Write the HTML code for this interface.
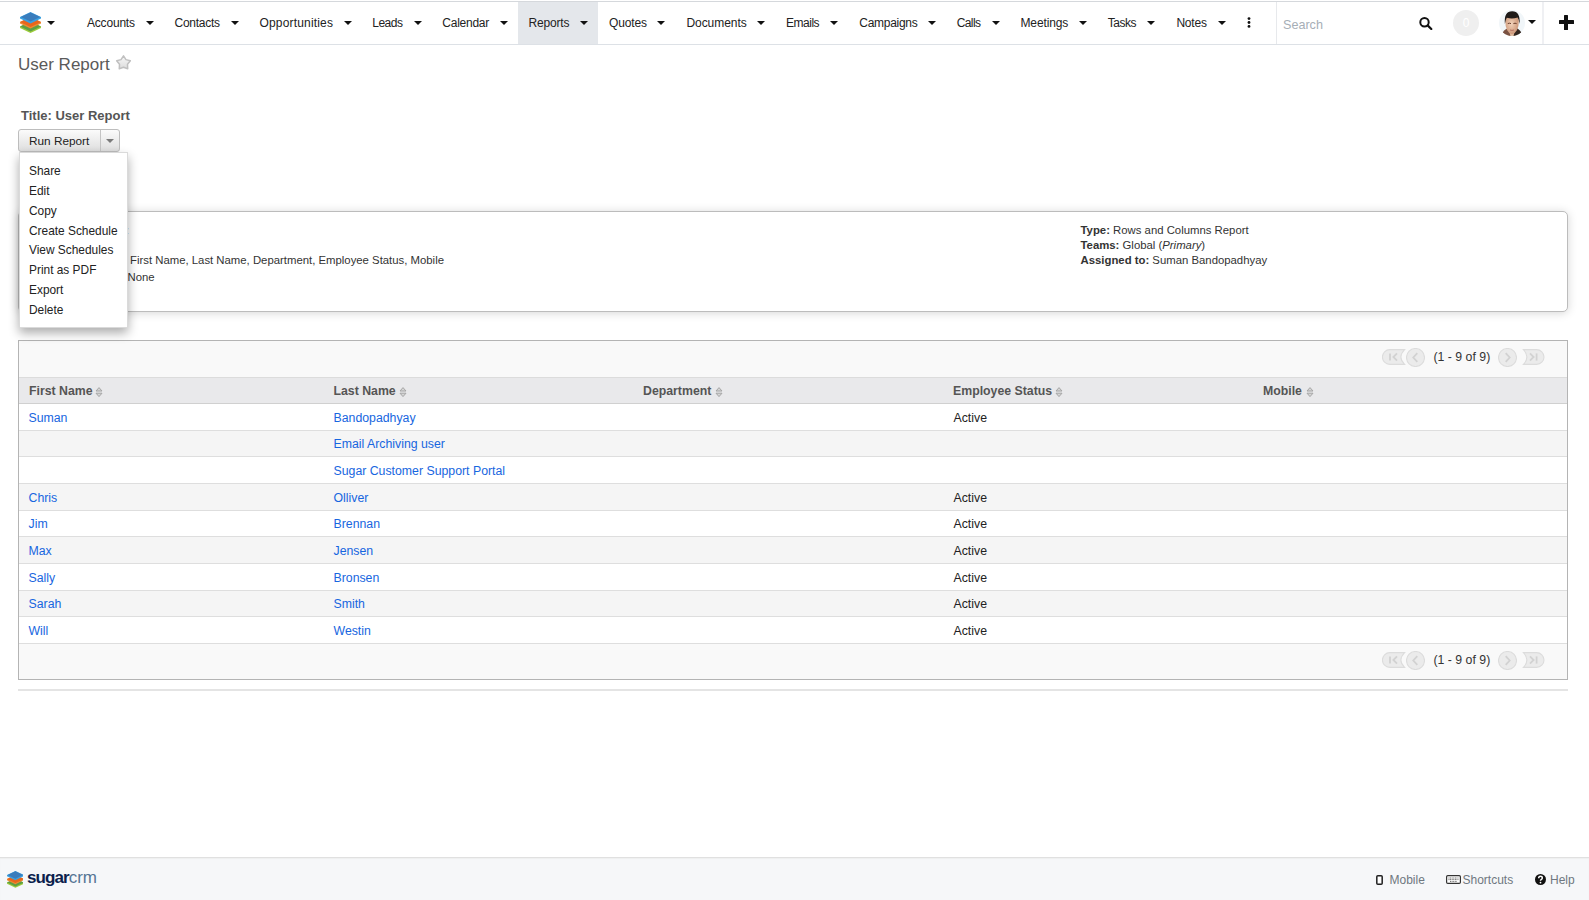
<!DOCTYPE html>
<html><head><meta charset="utf-8"><style>
*{margin:0;padding:0;box-sizing:border-box}
html,body{width:1589px;height:900px;overflow:hidden;background:#fff;font-family:"Liberation Sans",sans-serif;position:relative}
.abs{position:absolute}
#hdr{position:absolute;left:0;top:0;width:1589px;height:45px;background:#fff}
#hdr .tl{position:absolute;left:0;top:1px;width:1589px;height:1px;background:#d5d8dc}
#hdr .bl{position:absolute;left:0;top:44px;width:1589px;height:1px;background:#dde1e6}
#hl{position:absolute;left:518px;top:2px;width:80px;height:42px;background:#e4e7eb}
.nt{position:absolute;top:17px;font-size:12px;line-height:12px;color:#222;white-space:nowrap}
.car{position:absolute;top:21px;width:0;height:0;border-left:4px solid transparent;border-right:4px solid transparent;border-top:4.5px solid #111}
.title{position:absolute;left:18px;top:56px;font-size:17px;line-height:17px;color:#5a5a5a}
.t2{position:absolute;left:21px;top:109px;font-size:13px;line-height:13px;font-weight:bold;color:#555}
.btn{position:absolute;left:18px;top:129px;width:102px;height:23px;border:1px solid #bdbdbd;border-radius:3px;background:linear-gradient(#fbfbfb,#dedede)}
.btn .d{position:absolute;left:81px;top:0;width:1px;height:21px;background:#c4c4c4}
.btn .tx{position:absolute;left:10px;top:5px;font-size:11.8px;line-height:12px;color:#222}
.btn .c{position:absolute;left:87px;top:9px;width:0;height:0;border-left:4.3px solid transparent;border-right:4.3px solid transparent;border-top:4.2px solid #7a7a7a}
.menu{position:absolute;left:19px;top:152px;width:108.5px;height:176px;background:#fff;border:1px solid #dadada;box-shadow:0 5px 10px rgba(0,0,0,.33)}
.menu div{position:absolute;left:9px;font-size:11.9px;line-height:12px;color:#222;white-space:nowrap}
.panel{position:absolute;left:18px;top:211px;width:1550px;height:101px;border:1px solid #bcbcbc;border-radius:5px;box-shadow:0 1px 10px rgba(0,0,0,.17);background:#fff}
.pt{position:absolute;font-size:11.35px;line-height:12px;color:#333;white-space:nowrap}
.pt b{font-weight:bold}
.tbl{position:absolute;left:18px;top:340px;width:1550px;height:340px;border:1px solid #b4b4b4;background:#f9f9f9}
.hrow{position:absolute;left:0;top:36px;width:1548px;height:27px;background:#e9e9eb;border-top:1px solid #dcdcdc;border-bottom:1px solid #d0d0d0}
.th{position:absolute;top:7px;font-size:12.3px;line-height:12px;font-weight:bold;color:#555;white-space:nowrap}
.sort{position:absolute;top:9px}
.row{position:absolute;left:0;width:1548px;height:26.667px;border-bottom:1px solid #dedede}
.lk,.row .tx{position:absolute;top:7.5px;font-size:12.3px;line-height:12px;color:#1766e0;white-space:nowrap}
.row .tx{color:#222}
.pager{position:absolute;left:0;width:1550px;height:16px}
.ptx{position:absolute;left:1414.5px;top:1px;font-size:12.3px;line-height:14px;color:#333}
.sep{position:absolute;left:18px;top:689px;width:1550px;height:2px;background:#e4e4e4}
#ftr{position:absolute;left:0;top:857px;width:1589px;height:43px;background:#f6f7f9;border-top:1px solid #e0e0e0;box-shadow:inset 0 1px 1px #efefef}
.ft{position:absolute;top:16px;font-size:12px;line-height:12px;color:#6f7780;white-space:nowrap}
</style></head><body>
<div id="hdr">
<div class="tl"></div><div class="bl"></div>
<div id="hl"></div>
<svg style="position:absolute;left:20px;top:12px" width="21" height="21" viewBox="0 0 21 21">
<polygon points="0,14.5 10.5,9.5 21,14.5 21,16 10.5,21 0,16" fill="#9ccc3c"/>
<polygon points="0,14.5 10.5,9.5 21,14.5 10.5,19.5" fill="#5e9e44"/>
<polygon points="0,10 10.5,5 21,10 21,11.5 10.5,16.5 0,11.5" fill="#f08a30"/>
<polygon points="0,10 10.5,5 21,10 10.5,15" fill="#e8661c"/>
<polygon points="0,5 10.5,0 21,5 21,6.5 10.5,11.5 0,6.5" fill="#3aa0e0"/>
<polygon points="0.8,5 10.5,0.4 20.2,5 10.5,9.6" fill="#3a7cbc"/>
</svg>
<div class="car" style="left:47px"></div>
<div class="nt" style="left:87.0px;letter-spacing:-0.194px">Accounts</div><div class="car" style="left:146.0px"></div>
<div class="nt" style="left:174.5px;letter-spacing:-0.265px">Contacts</div><div class="car" style="left:231.0px"></div>
<div class="nt" style="left:259.4px;letter-spacing:0.185px">Opportunities</div><div class="car" style="left:344.0px"></div>
<div class="nt" style="left:372.3px;letter-spacing:-0.525px">Leads</div><div class="car" style="left:413.7px"></div>
<div class="nt" style="left:442.3px;letter-spacing:-0.242px">Calendar</div><div class="car" style="left:500.0px"></div>
<div class="nt" style="left:528.6px;letter-spacing:-0.185px">Reports</div><div class="car" style="left:580.0px"></div>
<div class="nt" style="left:609.0px;letter-spacing:-0.118px">Quotes</div><div class="car" style="left:657.3px"></div>
<div class="nt" style="left:686.4px;letter-spacing:-0.037px">Documents</div><div class="car" style="left:757.4px"></div>
<div class="nt" style="left:786.0px;letter-spacing:-0.482px">Emails</div><div class="car" style="left:830.4px"></div>
<div class="nt" style="left:859.3px;letter-spacing:-0.287px">Campaigns</div><div class="car" style="left:928.4px"></div>
<div class="nt" style="left:956.7px;letter-spacing:-0.594px">Calls</div><div class="car" style="left:991.9px"></div>
<div class="nt" style="left:1020.5px;letter-spacing:-0.128px">Meetings</div><div class="car" style="left:1079.3px"></div>
<div class="nt" style="left:1107.7px;letter-spacing:-0.443px">Tasks</div><div class="car" style="left:1147.3px"></div>
<div class="nt" style="left:1176.4px;letter-spacing:-0.186px">Notes</div><div class="car" style="left:1217.7px"></div>
<svg style="position:absolute;left:1246px;top:17px" width="6" height="11" viewBox="0 0 6 11"><circle cx="3" cy="1.6" r="1.4" fill="#111"/><circle cx="3" cy="5.5" r="1.4" fill="#111"/><circle cx="3" cy="9.4" r="1.4" fill="#111"/></svg>
<div style="position:absolute;left:1276px;top:2px;width:1px;height:42px;background:#e7e9ec"></div>
<div style="position:absolute;left:1283px;top:18.5px;font-size:12.6px;line-height:13px;color:#a6aeb6">Search</div>
<svg style="position:absolute;left:1419px;top:17px" width="14" height="13" viewBox="0 0 14 13"><circle cx="5.5" cy="5.3" r="4.2" stroke="#111" stroke-width="2" fill="none"/><path d="M8.6,8.4 L12.3,12" stroke="#111" stroke-width="2.2" stroke-linecap="round"/></svg>
<div style="position:absolute;left:1453px;top:9.5px;width:26px;height:26px;border-radius:50%;background:#efefef;color:#fff;font-size:12px;line-height:26px;text-align:center">0</div>
<svg style="position:absolute;left:1498.5px;top:10px" width="26" height="26" viewBox="0 0 26 26"><defs><clipPath id="av"><circle cx="13" cy="13" r="13"/></clipPath><radialGradient id="fc" cx="0.45" cy="0.45" r="0.6"><stop offset="0" stop-color="#f2d3bb"/><stop offset="1" stop-color="#c99070"/></radialGradient></defs><g clip-path="url(#av)"><rect width="26" height="26" fill="#f1f6f9"/><path d="M9,20 Q13,26 17,20 L18,26 L8,26 Z" fill="#e3bfa3"/><path d="M2,26 Q4.5,19 9.5,18.2 L11.5,26 Z" fill="#7a5242"/><path d="M24,26 Q21.5,19 16.5,17.8 L14.5,26 Z" fill="#33261f"/><path d="M6.3,11 Q6.3,5 13,5 Q19.8,5 19.8,11 Q19.8,22 13,24.5 Q6.3,22 6.3,11 Z" fill="url(#fc)"/><path d="M5.9,14 Q4.6,1.2 13.2,1.2 Q21.6,1.2 20.6,14 Q20,9.5 18.6,7.6 Q13,9.2 7.8,7.8 Q6.4,10 5.9,14 Z" fill="#1e1a18"/><path d="M8.8,13.6 q1.6,-0.8 3.2,0 M14.4,13.6 q1.6,-0.8 3.2,0" stroke="#6b3f2c" stroke-width="1" fill="none"/><path d="M11,20 q2,0.8 4,0" stroke="#b06a5c" stroke-width="0.9" fill="none"/></g></svg>
<div class="car" style="left:1528px;top:20px"></div>
<div style="position:absolute;left:1542px;top:2px;width:2px;height:42px;background:#eff0f3"></div>
<div style="position:absolute;left:1558.7px;top:20px;width:15px;height:4px;background:#111;border-radius:0.5px"></div>
<div style="position:absolute;left:1564.2px;top:14.5px;width:4px;height:15px;background:#111;border-radius:0.5px"></div>
</div>

<div class="title">User Report</div>
<svg style="position:absolute;left:114.5px;top:54px" width="17" height="17" viewBox="0 0 17 17"><defs><linearGradient id="sg" x1="0" y1="0" x2="0" y2="1"><stop offset="0" stop-color="#f8f8f8"/><stop offset="1" stop-color="#dcdcdc"/></linearGradient></defs><path d="M8.50,1.80 L10.97,5.60 L15.35,6.78 L12.49,10.30 L12.73,14.82 L8.50,13.20 L4.27,14.82 L4.51,10.30 L1.65,6.78 L6.03,5.60 Z" fill="url(#sg)" stroke="#c0c0c0" stroke-width="1.5" stroke-linejoin="round"/></svg>

<div class="t2">Title: User Report</div>
<div class="btn"><div class="tx">Run Report</div><div class="d"></div><div class="c"></div></div>

<div class="panel">
<div class="pt" style="left:10px;top:12px"><b>Module:</b> Users</div><div class="pt" style="left:107px;top:12px;color:#999">:</div>
<div class="pt" style="left:10px;top:27px"><b>Owner:</b></div>
<div class="pt" style="left:111px;top:42px">First Name, Last Name, Department, Employee Status, Mobile</div>
<div class="pt" style="left:108.5px;top:59px">None</div>
<div class="pt" style="left:1061.5px;top:12px"><b>Type:</b> Rows and Columns Report</div>
<div class="pt" style="left:1061.5px;top:27px"><b>Teams:</b> Global (<i>Primary</i>)</div>
<div class="pt" style="left:1061.5px;top:42px"><b>Assigned to:</b> Suman Bandopadhyay</div>
</div>

<div class="tbl">
<div class="pager" style="top:8px">
<svg style="position:absolute;left:1363px;top:0" width="24" height="16" viewBox="0 0 24 16"><path d="M7.8,0.6 H22.6 Q15.2,8 22.6,15.4 H7.8 A7.4,7.4 0 0 1 7.8,0.6 Z" fill="#ebebeb" stroke="#dcdcdc" stroke-width="1.1"/><path d="M8,4.4 V11.6" stroke="#d2d2d2" stroke-width="1.8" fill="none"/><path d="M15,4.4 L11.4,8 L15,11.6" stroke="#d2d2d2" stroke-width="1.8" fill="none"/></svg>
<svg style="position:absolute;left:1386.5px;top:-1.5px" width="19" height="19" viewBox="0 0 19 19"><circle cx="9.5" cy="9.5" r="9" fill="#ebebeb" stroke="#dcdcdc" stroke-width="1.1"/><path d="M11.3,5.2 L7.3,9.5 L11.3,13.8" stroke="#d2d2d2" stroke-width="1.8" fill="none"/></svg>
<div class="ptx">(1 - 9 of 9)</div>
<svg style="position:absolute;left:1478.5px;top:-1.5px" width="19" height="19" viewBox="0 0 19 19"><circle cx="9.5" cy="9.5" r="9" fill="#ebebeb" stroke="#dcdcdc" stroke-width="1.1"/><path d="M7.7,5.2 L11.7,9.5 L7.7,13.8" stroke="#d2d2d2" stroke-width="1.8" fill="none"/></svg>
<svg style="position:absolute;left:1502.5px;top:0" width="24" height="16" viewBox="0 0 24 16"><path d="M14.6,0.6 H1.4 Q8.4,8 1.4,15.4 H14.6 A7.4,7.4 0 0 0 14.6,0.6 Z" fill="#ebebeb" stroke="#dcdcdc" stroke-width="1.1"/><path d="M14.6,4.4 V11.6" stroke="#d2d2d2" stroke-width="1.8" fill="none"/><path d="M8,4.4 L11.6,8 L8,11.6" stroke="#d2d2d2" stroke-width="1.8" fill="none"/></svg>
</div>
<div class="hrow">
<div class="th" style="left:10px">First Name</div><svg class="sort" style="left:76px" width="8" height="11" viewBox="0 0 8 11"><path d="M1,4 L4,0.6 L7,4 Z M1,6.2 L4,9.6 L7,6.2 Z" fill="#d6d6d6" stroke="#a4a4a4" stroke-width="1"/></svg>
<div class="th" style="left:314.5px">Last Name</div><svg class="sort" style="left:380px" width="8" height="11" viewBox="0 0 8 11"><path d="M1,4 L4,0.6 L7,4 Z M1,6.2 L4,9.6 L7,6.2 Z" fill="#d6d6d6" stroke="#a4a4a4" stroke-width="1"/></svg>
<div class="th" style="left:624px">Department</div><svg class="sort" style="left:696px" width="8" height="11" viewBox="0 0 8 11"><path d="M1,4 L4,0.6 L7,4 Z M1,6.2 L4,9.6 L7,6.2 Z" fill="#d6d6d6" stroke="#a4a4a4" stroke-width="1"/></svg>
<div class="th" style="left:934px">Employee Status</div><svg class="sort" style="left:1036px" width="8" height="11" viewBox="0 0 8 11"><path d="M1,4 L4,0.6 L7,4 Z M1,6.2 L4,9.6 L7,6.2 Z" fill="#d6d6d6" stroke="#a4a4a4" stroke-width="1"/></svg>
<div class="th" style="left:1244px">Mobile</div><svg class="sort" style="left:1287px" width="8" height="11" viewBox="0 0 8 11"><path d="M1,4 L4,0.6 L7,4 Z M1,6.2 L4,9.6 L7,6.2 Z" fill="#d6d6d6" stroke="#a4a4a4" stroke-width="1"/></svg>
</div>
<div class="row" style="top:63.000px;background:#fff"><span class="lk" style="left:9.5px">Suman</span><span class="lk" style="left:314.5px">Bandopadhyay</span><span class="tx" style="left:934.5px">Active</span></div>
<div class="row" style="top:89.667px;background:#f5f5f5"><span class="lk" style="left:9.5px"></span><span class="lk" style="left:314.5px">Email Archiving user</span><span class="tx" style="left:934.5px"></span></div>
<div class="row" style="top:116.334px;background:#fff"><span class="lk" style="left:9.5px"></span><span class="lk" style="left:314.5px">Sugar Customer Support Portal</span><span class="tx" style="left:934.5px"></span></div>
<div class="row" style="top:143.001px;background:#f5f5f5"><span class="lk" style="left:9.5px">Chris</span><span class="lk" style="left:314.5px">Olliver</span><span class="tx" style="left:934.5px">Active</span></div>
<div class="row" style="top:169.668px;background:#fff"><span class="lk" style="left:9.5px">Jim</span><span class="lk" style="left:314.5px">Brennan</span><span class="tx" style="left:934.5px">Active</span></div>
<div class="row" style="top:196.335px;background:#f5f5f5"><span class="lk" style="left:9.5px">Max</span><span class="lk" style="left:314.5px">Jensen</span><span class="tx" style="left:934.5px">Active</span></div>
<div class="row" style="top:223.002px;background:#fff"><span class="lk" style="left:9.5px">Sally</span><span class="lk" style="left:314.5px">Bronsen</span><span class="tx" style="left:934.5px">Active</span></div>
<div class="row" style="top:249.669px;background:#f5f5f5"><span class="lk" style="left:9.5px">Sarah</span><span class="lk" style="left:314.5px">Smith</span><span class="tx" style="left:934.5px">Active</span></div>
<div class="row" style="top:276.336px;background:#fff"><span class="lk" style="left:9.5px">Will</span><span class="lk" style="left:314.5px">Westin</span><span class="tx" style="left:934.5px">Active</span></div>
<div class="pager" style="top:311px">
<svg style="position:absolute;left:1363px;top:0" width="24" height="16" viewBox="0 0 24 16"><path d="M7.8,0.6 H22.6 Q15.2,8 22.6,15.4 H7.8 A7.4,7.4 0 0 1 7.8,0.6 Z" fill="#ebebeb" stroke="#dcdcdc" stroke-width="1.1"/><path d="M8,4.4 V11.6" stroke="#d2d2d2" stroke-width="1.8" fill="none"/><path d="M15,4.4 L11.4,8 L15,11.6" stroke="#d2d2d2" stroke-width="1.8" fill="none"/></svg>
<svg style="position:absolute;left:1386.5px;top:-1.5px" width="19" height="19" viewBox="0 0 19 19"><circle cx="9.5" cy="9.5" r="9" fill="#ebebeb" stroke="#dcdcdc" stroke-width="1.1"/><path d="M11.3,5.2 L7.3,9.5 L11.3,13.8" stroke="#d2d2d2" stroke-width="1.8" fill="none"/></svg>
<div class="ptx">(1 - 9 of 9)</div>
<svg style="position:absolute;left:1478.5px;top:-1.5px" width="19" height="19" viewBox="0 0 19 19"><circle cx="9.5" cy="9.5" r="9" fill="#ebebeb" stroke="#dcdcdc" stroke-width="1.1"/><path d="M7.7,5.2 L11.7,9.5 L7.7,13.8" stroke="#d2d2d2" stroke-width="1.8" fill="none"/></svg>
<svg style="position:absolute;left:1502.5px;top:0" width="24" height="16" viewBox="0 0 24 16"><path d="M14.6,0.6 H1.4 Q8.4,8 1.4,15.4 H14.6 A7.4,7.4 0 0 0 14.6,0.6 Z" fill="#ebebeb" stroke="#dcdcdc" stroke-width="1.1"/><path d="M14.6,4.4 V11.6" stroke="#d2d2d2" stroke-width="1.8" fill="none"/><path d="M8,4.4 L11.6,8 L8,11.6" stroke="#d2d2d2" stroke-width="1.8" fill="none"/></svg>
</div>
</div>
<div class="sep"></div>

<div class="menu">
<div style="top:12.00px">Share</div>
<div style="top:31.85px">Edit</div>
<div style="top:51.70px">Copy</div>
<div style="top:71.55px">Create Schedule</div>
<div style="top:91.40px">View Schedules</div>
<div style="top:111.25px">Print as PDF</div>
<div style="top:131.10px">Export</div>
<div style="top:150.95px">Delete</div>
</div>

<div id="ftr">
<svg style="position:absolute;left:6.5px;top:13px" width="16.8" height="16.8" viewBox="0 0 21 21">
<polygon points="0,14.5 10.5,9.5 21,14.5 21,16 10.5,21 0,16" fill="#9ccc3c"/>
<polygon points="0,14.5 10.5,9.5 21,14.5 10.5,19.5" fill="#5e9e44"/>
<polygon points="0,10 10.5,5 21,10 21,11.5 10.5,16.5 0,11.5" fill="#f08a30"/>
<polygon points="0,10 10.5,5 21,10 10.5,15" fill="#e8661c"/>
<polygon points="0,5 10.5,0 21,5 21,6.5 10.5,11.5 0,6.5" fill="#3aa0e0"/>
<polygon points="0.8,5 10.5,0.4 20.2,5 10.5,9.6" fill="#3a7cbc"/>
</svg>
<div style="position:absolute;left:27px;top:10px;font-size:17px;line-height:20px;color:#0c1f4d;white-space:nowrap"><b style="letter-spacing:-0.9px">sugar</b><span style="color:#557594;letter-spacing:-0.1px">crm</span></div>
<svg style="position:absolute;left:1376px;top:16.5px" width="7" height="10" viewBox="0 0 7 10"><rect x="0.8" y="0.8" width="5.4" height="8.4" rx="1" fill="none" stroke="#222" stroke-width="1.5"/><rect x="2" y="2" width="3" height="5.5" fill="#fff"/></svg>
<div class="ft" style="left:1389.5px">Mobile</div>
<svg style="position:absolute;left:1446px;top:16.5px" width="15" height="9" viewBox="0 0 15 9"><rect x="0.6" y="0.6" width="13.8" height="7.8" rx="1.2" fill="#fff" stroke="#333" stroke-width="1.2"/><path d="M2.5,3 h10 M2.5,4.6 h10 M4,6.4 h7" stroke="#555" stroke-width="0.9" stroke-dasharray="1,0.6"/></svg>
<div class="ft" style="left:1462.5px">Shortcuts</div>
<svg style="position:absolute;left:1535px;top:15.5px" width="11" height="11" viewBox="0 0 11 11"><circle cx="5.5" cy="5.5" r="5.5" fill="#111"/><path d="M3.7,4.2 Q3.7,2.3 5.5,2.3 Q7.3,2.3 7.3,4 Q7.3,5 6.1,5.6 Q5.5,5.9 5.5,6.8" stroke="#fff" stroke-width="1.5" fill="none"/><circle cx="5.5" cy="8.6" r="0.9" fill="#fff"/></svg>
<div class="ft" style="left:1550px">Help</div>
</div>
</body></html>
